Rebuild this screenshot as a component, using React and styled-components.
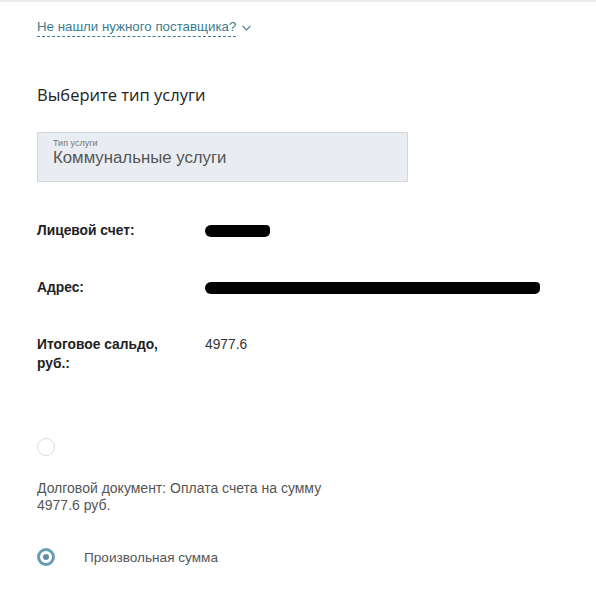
import styled, { createGlobalStyle } from "styled-components"

const GlobalStyle = createGlobalStyle`
  body {
    margin: 0;
    background: #fff;
    font-family: "Liberation Sans", Arial, sans-serif;
  }
`

const Page = styled.div`
  width: 596px;
  height: 600px;
  box-sizing: border-box;
  border-top: 2px solid #ececec;
  padding: 16px 0 0 37px;
  overflow: hidden;
`

const ToggleLink = styled.div`
  display: flex;
  align-items: center;
  gap: 6px;
  color: #3b7d8f;
  font-size: 13.3px;
  line-height: 18px;
`

const LinkText = styled.span`
  border-bottom: 1px dashed #3b7d8f;
`

const Title = styled.h2`
  margin: 46px 0 0;
  font-family: "Open Sans", sans-serif;
  font-weight: 400;
  font-size: 16.5px;
  line-height: 24px;
  color: #222;
`

const SelectBox = styled.div`
  margin-top: 25px;
  width: 371px;
  height: 50px;
  box-sizing: border-box;
  background: #e9edf1;
  border: 1px solid #d3d7db;
  padding: 5px 15px 0;
`

const SelectLabel = styled.div`
  font-size: 9px;
  line-height: 10px;
  color: #777;
`

const SelectValue = styled.div`
  font-size: 16.8px;
  line-height: 20px;
  color: #555;
`

const Details = styled.div`
  margin-top: 39px;
  display: flex;
  flex-direction: column;
  gap: 38px;
`

const Row = styled.div`
  display: grid;
  grid-template-columns: 168px 1fr;
  font-size: 13.8px;
  line-height: 19px;
  color: #222;
`

const Key = styled.div`
  font-weight: 700;
`

const Value = styled.div`
  color: #333;
`

const Redacted = styled.span`
  display: inline-block;
  vertical-align: middle;
  width: ${p => p.w}px;
  height: 12px;
  background: #000;
  border-radius: 6px 4px 5px 6px;
`

const Radio = styled.span`
  flex: none;
  width: 18px;
  height: 18px;
  box-sizing: border-box;
  border-radius: 50%;
  border: ${p => p.checked ? '3px solid #6a9db3' : '1px solid #dcdcdc'};
  display: flex;
  align-items: center;
  justify-content: center;
  &::after {
    content: '';
    display: ${p => p.checked ? 'block' : 'none'};
    width: 6px;
    height: 6px;
    border-radius: 50%;
    background: #5d8ea4;
  }
`

const Option = styled.div`
  display: flex;
  align-items: center;
  gap: 29px;
  margin-top: ${p => p.top}px;
  font-size: 13.6px;
  color: #555;
`

const DebtText = styled.div`
  margin-top: 24px;
  width: 300px;
  font-size: 14px;
  line-height: 17px;
  color: #555;
`

const Chevron = () => (
  <svg width="9" height="6" viewBox="0 0 9 6" fill="none" stroke="#3b7d8f" strokeWidth="1.1">
    <path d="M0.5 0.8 L4.5 5 L8.5 0.8" />
  </svg>
)

const App = () => {
  return (
    <Page>
      <GlobalStyle />
      <ToggleLink>
        <LinkText>Не нашли нужного поставщика?</LinkText>
        <Chevron />
      </ToggleLink>
      <Title>Выберите тип услуги</Title>
      <SelectBox>
        <SelectLabel>Тип услуги</SelectLabel>
        <SelectValue>Коммунальные услуги</SelectValue>
      </SelectBox>
      <Details>
        <Row>
          <Key>Лицевой счет:</Key>
          <Value><Redacted w={65} /></Value>
        </Row>
        <Row>
          <Key>Адрес:</Key>
          <Value><Redacted w={335} /></Value>
        </Row>
        <Row>
          <Key>Итоговое сальдо,<br />руб.:</Key>
          <Value>4977.6</Value>
        </Row>
      </Details>
      <Option top={65}>
        <Radio />
      </Option>
      <DebtText>Долговой документ: Оплата счета на сумму 4977.6 руб.</DebtText>
      <Option top={34}>
        <Radio checked />
        <span>Произвольная сумма</span>
      </Option>
    </Page>
  )
}

export default App
